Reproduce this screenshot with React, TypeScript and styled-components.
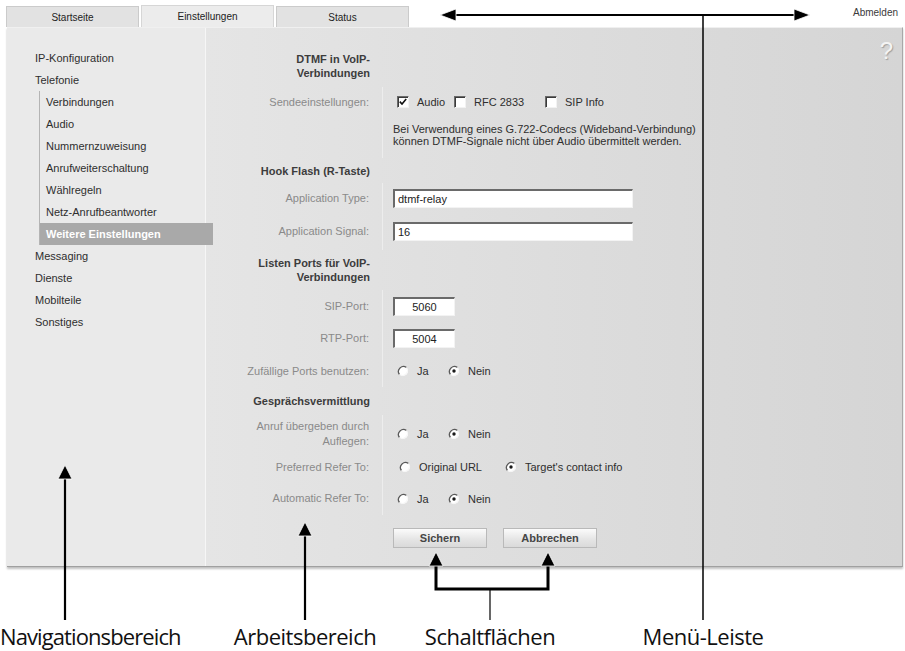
import React from 'react';
import styled, { createGlobalStyle } from 'styled-components';

const GlobalStyle = createGlobalStyle`
  html, body {
    margin: 0;
    padding: 0;
    background: #ffffff;
  }
  body {
    font-family: "Liberation Sans", Arial, sans-serif;
    color: #333333;
  }
`;

// Page frame
const Page = styled.div`
  position: relative;
  width: 905px;
  height: 651px;
  overflow: hidden;
  display: flex;
  flex-direction: column;
`;

// Menu bar with tabs
const TopBar = styled.div`
  display: flex;
  align-items: flex-end;
  height: 27px;
  padding-left: 6px;
  box-sizing: border-box;
`;

const Tab = styled.div<{ $active?: boolean }>`
  width: 133px;
  height: ${(p) => (p.$active ? 22 : 21)}px;
  margin-right: 2px;
  box-sizing: border-box;
  display: flex;
  align-items: center;
  justify-content: center;
  font-size: 10px;
  color: #222222;
  background: ${(p) => (p.$active ? '#ececec' : '#e2e2e2')};
  border: 1px solid ${(p) => (p.$active ? '#d6d6d6' : '#cbcbcb')};
  border-bottom: none;
`;

const Logout = styled.div`
  margin-left: auto;
  align-self: flex-start;
  margin-top: 7px;
  margin-right: 7px;
  font-size: 10px;
  color: #3a3a3a;
`;

// Main panel
const Panel = styled.div`
  margin-left: 7px;
  width: 896px;
  height: 540px;
  display: grid;
  grid-template-columns: 199px 1fr;
  box-sizing: border-box;
  border-top: 1px solid #f0f0f0;
  border-right: 1px solid #a8a8a8;
  border-bottom: 1px solid #a0a0a0;
  box-shadow: 0 2px 2px rgba(0, 0, 0, 0.25);
`;

const Nav = styled.div`
  background: #eaeaea;
  border-right: 1px solid #f6f6f6;
  padding: 19px 0 0 28px;
  font-size: 11px;
`;

const NavItem = styled.div`
  height: 22px;
  line-height: 22px;
  color: #2e2e2e;
  white-space: nowrap;
`;

const SubList = styled.div`
  margin-left: 4px;
  border-left: 1px solid #b4b4b4;
`;

const SubItem = styled.div<{ $active?: boolean }>`
  height: 22px;
  line-height: 22px;
  padding-left: 6px;
  white-space: nowrap;
  color: ${(p) => (p.$active ? '#ffffff' : '#2e2e2e')};
  font-weight: ${(p) => (p.$active ? 700 : 400)};
  background: ${(p) => (p.$active ? '#a9a9a9' : 'transparent')};
  width: ${(p) => (p.$active ? '167px' : 'auto')};
  position: relative;
  z-index: 1;
`;

// Work area
const Work = styled.div`
  position: relative;
  background: linear-gradient(90deg, #e5e5e5 0%, #dcdcdc 55%, #d5d5d5 100%);
  padding-top: 17px;
  font-size: 11px;
`;

const Help = styled.div`
  position: absolute;
  top: 11px;
  right: 9px;
  font-size: 24px;
  line-height: 24px;
  color: #f4f4f4;
  text-shadow: 1px 1px 1px #a0a0a0;
`;

const Row = styled.div<{ $h: number }>`
  display: grid;
  grid-template-columns: 177px 1fr;
  height: ${(p) => p.$h}px;
`;

const Heading = styled.div`
  display: flex;
  align-items: center;
  justify-content: flex-end;
  text-align: right;
  padding-right: 13px;
  font-weight: 700;
  line-height: 14px;
  color: #3c3c3c;
`;

const Label = styled.div`
  display: flex;
  align-items: center;
  justify-content: flex-end;
  text-align: right;
  padding-right: 13px;
  line-height: 15px;
  color: #8a8a8a;
  border-right: 1px solid #ededed;
`;

const Value = styled.div<{ $top?: boolean }>`
  display: flex;
  align-items: ${(p) => (p.$top ? 'flex-start' : 'center')};
  padding-left: 10px;
  color: #2e2e2e;
`;

const Note = styled.p`
  margin: 6px 0 0;
  line-height: 12px;
  color: #2e2e2e;
`;

const Option = styled.label<{ $w: number }>`
  display: flex;
  align-items: center;
  gap: 8px;
  width: ${(p) => p.$w}px;
  flex: none;
  white-space: nowrap;
`;

const Box = styled.span`
  width: 12px;
  height: 12px;
  box-sizing: border-box;
  background: #ffffff;
  border-top: 1px solid #6a6a6a;
  border-left: 1px solid #6a6a6a;
  border-right: 1px solid #f2f2f2;
  border-bottom: 1px solid #f2f2f2;
  box-shadow: inset 1px 1px 0 #3a3a3a;
  display: flex;
  align-items: center;
  justify-content: center;
`;

const Field = styled.div<{ $w: number; $center?: boolean }>`
  width: ${(p) => p.$w}px;
  height: 19px;
  box-sizing: border-box;
  background: #ffffff;
  border-top: 2px solid #6a6a6a;
  border-left: 2px solid #6a6a6a;
  border-right: 1px solid #f3f3f3;
  border-bottom: 1px solid #f3f3f3;
  padding-left: ${(p) => (p.$center ? 0 : 3)}px;
  display: flex;
  align-items: center;
  justify-content: ${(p) => (p.$center ? 'center' : 'flex-start')};
  font-size: 11px;
  color: #222222;
`;

const ButtonRow = styled.div`
  display: flex;
  gap: 16px;
  padding: 13px 0 0 187px;
`;

const Button = styled.div`
  width: 94px;
  height: 20px;
  box-sizing: border-box;
  border: 1px solid #b9b9b9;
  background: linear-gradient(#fbfbfb, #e4e4e4 60%, #dadada);
  display: flex;
  align-items: center;
  justify-content: center;
  font-weight: 700;
  font-size: 11px;
  color: #454545;
`;

// Captions under the screenshot
const Captions = styled.div`
  display: grid;
  grid-template-columns: 230px 150px 220px 206px;
  margin-top: 55px;
  font-family: "Open Sans", "Noto Sans", sans-serif;
  font-size: 22px;
  line-height: 28px;
  letter-spacing: -0.5px;
  color: #111111;
`;

const Caption = styled.div<{ $start?: boolean }>`
  display: flex;
  justify-content: ${(p) => (p.$start ? 'flex-start' : 'center')};
  white-space: nowrap;
  letter-spacing: ${(p) => (p.$start ? '-0.9px' : 'inherit')};
`;

const Overlay = styled.svg`
  position: absolute;
  left: 0;
  top: 0;
  pointer-events: none;
`;

const Check = () => (
  <svg width="8" height="8" viewBox="0 0 8 8">
    <path d="M0.8 3.6 L3 6 L7.2 1" fill="none" stroke="#111" strokeWidth="1.6" />
  </svg>
);

const CheckOption = ({ w, checked, children }: { w: number; checked?: boolean; children: React.ReactNode }) => (
  <Option $w={w}>
    <Box>{checked && <Check />}</Box>
    {children}
  </Option>
);

const Radio = ({ on }: { on?: boolean }) => (
  <svg width="12" height="12" viewBox="0 0 12 12">
    <circle cx="6" cy="6" r="5" fill="#ffffff" />
    <path d="M9.5 2.5 A5 5 0 0 0 2.5 9.5" fill="none" stroke="#5a5a5a" strokeWidth="1.3" />
    <path d="M2.5 9.5 A5 5 0 0 0 9.5 2.5" fill="none" stroke="#f6f6f6" strokeWidth="1" />
    {on && <circle cx="6" cy="6" r="1.7" fill="#1a1a1a" />}
  </svg>
);

const RadioOption = ({ w, on, children }: { w: number; on?: boolean; children: React.ReactNode }) => (
  <Option $w={w}>
    <Radio on={on} />
    {children}
  </Option>
);

const YesNo = () => (
  <>
    <span style={{ width: 4 }} />
    <RadioOption w={51}>Ja</RadioOption>
    <RadioOption w={60} on>Nein</RadioOption>
  </>
);

const subItems = [
  'Verbindungen',
  'Audio',
  'Nummernzuweisung',
  'Anrufweiterschaltung',
  'Wählregeln',
  'Netz-Anrufbeantworter',
];

const Arrow = ({ x, y, dir }: { x: number; y: number; dir: 'up' | 'left' | 'right' }) => {
  const pts =
    dir === 'up'
      ? `${x},${y} ${x - 7},${y + 14} ${x + 7},${y + 14}`
      : dir === 'left'
      ? `${x},${y} ${x + 16},${y - 6} ${x + 16},${y + 6}`
      : `${x},${y} ${x - 16},${y - 6} ${x - 16},${y + 6}`;
  return <polygon points={pts} fill="#000" stroke="#fff" strokeWidth="0.8" />;
};

const App = () => (
  <Page>
    <GlobalStyle />
    <TopBar>
      <Tab>Startseite</Tab>
      <Tab $active>Einstellungen</Tab>
      <Tab>Status</Tab>
      <Logout>Abmelden</Logout>
    </TopBar>

    <Panel>
      <Nav>
        <NavItem>IP-Konfiguration</NavItem>
        <NavItem>Telefonie</NavItem>
        <SubList>
          {subItems.map((s) => (
            <SubItem key={s}>{s}</SubItem>
          ))}
          <SubItem $active>Weitere Einstellungen</SubItem>
        </SubList>
        <NavItem>Messaging</NavItem>
        <NavItem>Dienste</NavItem>
        <NavItem>Mobilteile</NavItem>
        <NavItem>Sonstiges</NavItem>
      </Nav>

      <Work>
        <Help>?</Help>

        <Row $h={42}>
          <Heading>DTMF in VoIP-<br />Verbindungen</Heading>
        </Row>
        <Row $h={30}>
          <Label>Sendeeinstellungen:</Label>
          <Value>
            <span style={{ width: 4 }} />
            <CheckOption w={57} checked>Audio</CheckOption>
            <CheckOption w={91}>RFC 2833</CheckOption>
            <CheckOption w={80}>SIP Info</CheckOption>
          </Value>
        </Row>
        <Row $h={41}>
          <Label />
          <Value $top>
            <Note>
              Bei Verwendung eines G.722-Codecs (Wideband-Verbindung)<br />
              können DTMF-Signale nicht über Audio übermittelt werden.
            </Note>
          </Value>
        </Row>

        <Row $h={25}>
          <Heading>Hook Flash (R-Taste)</Heading>
        </Row>
        <Row $h={30}>
          <Label>Application Type:</Label>
          <Value><Field $w={240}>dtmf-relay</Field></Value>
        </Row>
        <Row $h={37}>
          <Label>Application Signal:</Label>
          <Value><Field $w={240}>16</Field></Value>
        </Row>

        <Row $h={40}>
          <Heading>Listen Ports für VoIP-<br />Verbindungen</Heading>
        </Row>
        <Row $h={32}>
          <Label>SIP-Port:</Label>
          <Value><Field $w={62} $center>5060</Field></Value>
        </Row>
        <Row $h={33}>
          <Label>RTP-Port:</Label>
          <Value><Field $w={62} $center>5004</Field></Value>
        </Row>
        <Row $h={32}>
          <Label>Zufällige Ports benutzen:</Label>
          <Value><YesNo /></Value>
        </Row>

        <Row $h={28}>
          <Heading>Gesprächsvermittlung</Heading>
        </Row>
        <Row $h={37}>
          <Label>Anruf übergeben durch<br />Auflegen:</Label>
          <Value><YesNo /></Value>
        </Row>
        <Row $h={30}>
          <Label>Preferred Refer To:</Label>
          <Value>
            <span style={{ width: 6 }} />
            <RadioOption w={106}>Original URL</RadioOption>
            <RadioOption w={140} on>Target's contact info</RadioOption>
          </Value>
        </Row>
        <Row $h={33}>
          <Label>Automatic Refer To:</Label>
          <Value><YesNo /></Value>
        </Row>

        <ButtonRow>
          <Button>Sichern</Button>
          <Button>Abbrechen</Button>
        </ButtonRow>
      </Work>
    </Panel>

    <Captions>
      <Caption $start>Navigationsbereich</Caption>
      <Caption>Arbeitsbereich</Caption>
      <Caption>Schaltflächen</Caption>
      <Caption>Menü-Leiste</Caption>
    </Captions>

    {/* callout lines and arrows */}
    <Overlay width="905" height="651" viewBox="0 0 905 651">
      <line x1="452" y1="15" x2="798" y2="15" stroke="#000" strokeWidth="2" />
      <Arrow x={440} y={15} dir="left" />
      <Arrow x={810} y={15} dir="right" />
      <line x1="703" y1="15" x2="703" y2="620" stroke="#000" strokeWidth="1.5" />

      <line x1="65" y1="475" x2="65" y2="620" stroke="#000" strokeWidth="2.2" />
      <Arrow x={65} y={465} dir="up" />

      <line x1="305" y1="532" x2="305" y2="620" stroke="#000" strokeWidth="2.2" />
      <Arrow x={305} y={522} dir="up" />

      <polyline points="436,562 436,589 548,589 548,562" fill="none" stroke="#000" strokeWidth="3" />
      <Arrow x={436} y={552} dir="up" />
      <Arrow x={548} y={552} dir="up" />
      <line x1="490" y1="589" x2="490" y2="620" stroke="#000" strokeWidth="1.2" />
    </Overlay>
  </Page>
);

export default App;
